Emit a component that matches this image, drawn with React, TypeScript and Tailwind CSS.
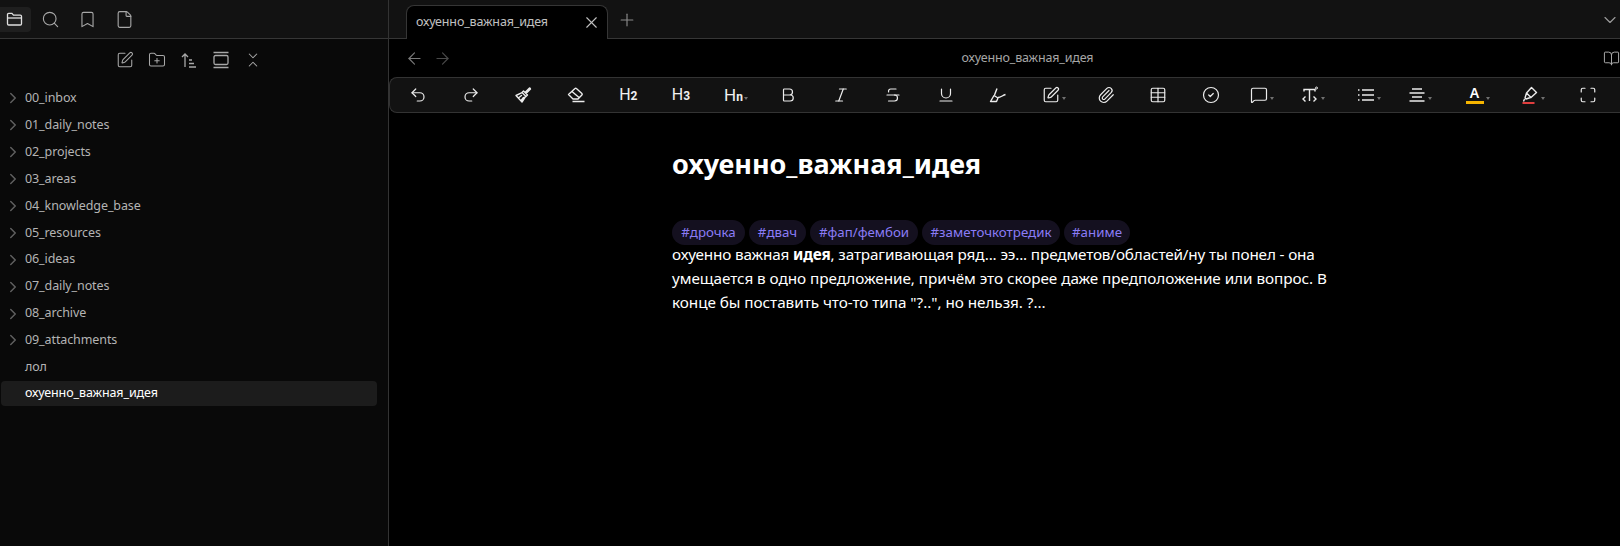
import type { ReactNode } from 'react'
import {
  Undo2, Redo2, Bold, Italic, Strikethrough, Underline, SquarePen, Paperclip, Table,
  CircleCheck, MessageSquare, Maximize, ChevronRight, ChevronDown, X, Plus,
  ArrowLeft, ArrowRight, BookOpen, Search, Bookmark, File, FolderPlus, ChevronsDownUp,
} from 'lucide-react'

const FOLDERS = [
  '00_inbox', '01_daily_notes', '02_projects', '03_areas', '04_knowledge_base',
  '05_resources', '06_ideas', '07_daily_notes', '08_archive', '09_attachments',
]

const TAGS = [
  { label: '#дрочка', width: 'w-[73px]' },
  { label: '#двач', width: 'w-[57px]' },
  { label: '#фап/фембои', width: 'w-[108px]' },
  { label: '#заметочкотредик', width: 'w-[138px]' },
  { label: '#аниме', width: 'w-[66px]' },
]

function Tool({ children, caret, width = 'w-[18px]' }: { children: ReactNode; caret?: boolean; width?: string }) {
  return (
    <div className={`relative h-[18px] flex items-center text-[#ececec] ${width}`}>
      <div className="w-[18px] h-[18px] flex items-center justify-center shrink-0">{children}</div>
      {caret && (
        <span className="absolute left-[20px] bottom-[4px] w-0 h-0 border-x-[2.5px] border-t-[3px] border-x-transparent border-t-[#707070]" />
      )}
    </div>
  )
}

function Heading({ n, big }: { n: string; big?: boolean }) {
  return (
    <span className={`font-['Roboto',sans-serif] leading-none text-[#f0f0f0] whitespace-nowrap ${big ? 'text-[17px]' : 'text-[16px]'}`}>
      H<span className="text-[12px] font-bold">{n}</span>
    </span>
  )
}

const ic = { size: 20, strokeWidth: 1.6 }

export default function App() {
  return (
    <div className="w-[1620px] h-[546px] flex bg-black overflow-hidden font-['Noto_Sans',sans-serif]">
      {/* Sidebar */}
      <aside className="w-[389px] shrink-0 flex flex-col bg-[#090909] border-r border-[#333]">
        <div className="h-[39px] shrink-0 flex items-center gap-[5px] bg-[#121212] border-b border-[#363636]">
          <div className="w-[31px] h-[25px] pr-[2px] rounded-r-[4px] bg-[#1f1f1f] flex items-center justify-center text-[#e0e0e0]">
            <svg width="17" height="17" viewBox="0 0 17 17" fill="none" stroke="currentColor" strokeWidth="1.3">
              <path d="M1.5 5.5V3.5a1.2 1.2 0 0 1 1.2-1.2h3.2l1.6 1.8h6.8a1.2 1.2 0 0 1 1.2 1.2v7.5a1.2 1.2 0 0 1-1.2 1.2H2.7a1.2 1.2 0 0 1-1.2-1.2z" />
              <path d="M1.5 7h14" />
            </svg>
          </div>
          <div className="w-[32px] flex justify-center text-[#a8a8a8] -ml-[2px]"><Search size={19} strokeWidth={1.4} /></div>
          <div className="w-[32px] flex justify-center text-[#a8a8a8]"><Bookmark size={19} strokeWidth={1.4} /></div>
          <div className="w-[32px] flex justify-center text-[#a8a8a8]"><File size={19} strokeWidth={1.4} /></div>
        </div>

        <div className="h-[42px] shrink-0 flex items-center justify-center gap-[14px] text-[#a8a8a8] pr-[10px]">
          <SquarePen size={18} strokeWidth={1.4} />
          <FolderPlus size={18} strokeWidth={1.4} />
          <svg width="18" height="18" viewBox="0 0 18 18" fill="none" stroke="currentColor" strokeWidth="1.3">
            <path d="M5 16V3M2 6l3-3 3 3M9 9h3M9 12.5h5M9 16h7" />
          </svg>
          <svg width="18" height="18" viewBox="0 0 18 18" fill="none" stroke="currentColor" strokeWidth="1.3">
            <path d="M1.5 1.5h15M1.5 16.5h15" />
            <rect x="2" y="4.5" width="14" height="9" rx="1.5" />
          </svg>
          <ChevronsDownUp size={18} strokeWidth={1.4} />
        </div>

        <nav className="flex flex-col pt-[4px] pr-[11px] pl-px text-[12.5px] tracking-[-0.1px] text-[#b4b4b4]">
          {FOLDERS.map(f => (
            <div key={f} className="h-[26.9px] flex items-center">
              <ChevronRight size={18} strokeWidth={2} className="ml-[3px] mr-[3px] text-[#5f5f5f]" />
              <span>{f}</span>
            </div>
          ))}
          <div className="h-[27px] flex items-center pl-[24px]">лол</div>
          <div className="h-[25px] flex items-center pl-[24px] rounded-[4px] bg-[#1c1c1c] text-white">охуенно_важная_идея</div>
        </nav>
      </aside>

      {/* Main */}
      <main className="flex-1 min-w-0 flex flex-col">
        <div className="h-[39px] shrink-0 flex items-end bg-[#121212] border-b border-[#363636] relative">
          <div className="ml-[17px] w-[202px] h-[34px] -mb-px flex items-center justify-between pl-[9px] pr-[6px] bg-black border border-b-0 border-[#363636] rounded-t-[8px]">
            <span className="text-[12.5px] tracking-[-0.15px] text-[#c0c0c0]">охуенно_важная_идея</span>
            <X size={19} strokeWidth={1.4} className="text-[#c0c0c0]" />
          </div>
          <Plus size={20} strokeWidth={1.4} className="ml-[9px] mb-[8px] text-[#8a8a8a]" />
          <ChevronDown size={20} strokeWidth={1.4} className="absolute right-0 top-[10px] text-[#9a9a9a]" />
        </div>

        <div className="h-[38px] shrink-0 flex items-center relative">
          <ArrowLeft size={19} strokeWidth={1.4} className="ml-[16px] text-[#7a7a7a]" />
          <ArrowRight size={19} strokeWidth={1.4} className="ml-[9px] text-[#4a4a4a]" />
          <span className="absolute left-0 right-0 text-center text-[12.5px] tracking-[-0.15px] text-[#a6a6a6] pl-[46px]">охуенно_важная_идея</span>
          <BookOpen size={17} strokeWidth={1.4} className="absolute right-0 text-[#a8a8a8]" />
        </div>

        <div className="h-[36px] shrink-0 flex items-center justify-between pl-[19px] pr-[23px] bg-[#121212] border border-r-0 border-[#333] rounded-l-[8px]">
          <Tool><Undo2 {...ic} /></Tool>
          <Tool><Redo2 {...ic} /></Tool>
          <Tool>
            <svg width="18" height="18" viewBox="0 0 18 18" fill="none" stroke="currentColor" strokeWidth="1.4" strokeLinejoin="round" strokeLinecap="round">
              <path d="M11 6.5l4.5-4.5a1.2 1.2 0 0 1 1 1L12 7.5zM9.5 5l4 4-1.5 1.5-4-4zM7.5 6.8L2 9.5l6 6.5 3.5-5.5M5 11.5l2.5-2M7.5 14l2-2.5" />
            </svg>
          </Tool>
          <Tool>
            <svg width="18" height="18" viewBox="0 0 18 18" fill="none" stroke="currentColor" strokeWidth="1.4" strokeLinejoin="round">
              <path d="M1.5 8.5L8 2.5a1 1 0 0 1 1.4 0l5.5 5a1 1 0 0 1 0 1.4L11 13H6zM5 5.5l7 6M5.5 15.5h12" />
            </svg>
          </Tool>
          <Tool><Heading n="2" /></Tool>
          <Tool><Heading n="3" /></Tool>
          <Tool caret width="w-[20px]"><Heading n="n" big /></Tool>
          <Tool><Bold {...ic} /></Tool>
          <Tool><Italic {...ic} /></Tool>
          <Tool><Strikethrough {...ic} /></Tool>
          <Tool><Underline {...ic} /></Tool>
          <Tool>
            <svg width="18" height="18" viewBox="0 0 18 18" fill="none" stroke="currentColor" strokeWidth="1.4" strokeLinejoin="round">
              <path d="M1.5 15.5h6l1.5-3.5-4-2.5zM5.5 9l2.5-6.5M9 11.5c2.5 0 4.5-2 7.5-3" />
            </svg>
          </Tool>
          <Tool caret width="w-[20px]"><SquarePen {...ic} /></Tool>
          <Tool><Paperclip {...ic} /></Tool>
          <Tool><Table {...ic} /></Tool>
          <Tool width="w-[14px]"><CircleCheck {...ic} /></Tool>
          <Tool caret width="w-[16px]"><MessageSquare {...ic} /></Tool>
          <Tool caret width="w-[22px]">
            <svg width="18" height="18" viewBox="0 0 18 18" fill="none" stroke="currentColor" strokeWidth="1.4">
              <path d="M3 5.5V3.5h11v2M8.5 3.5V15M4.5 10.5l-2.5 2.5 2.5 2.5M12.5 10.5l2.5 2.5-2.5 2.5" />
              <circle cx="15.5" cy="2" r="1" strokeWidth="1" />
            </svg>
          </Tool>
          <Tool caret width="w-[16px]">
            <svg width="18" height="18" viewBox="0 0 18 18" fill="none" stroke="currentColor" strokeWidth="1.6">
              <path d="M5 4h12M5 9h12M5 14h12M1 4h1.5M1 9h1.5M1 14h1.5" />
            </svg>
          </Tool>
          <Tool caret width="w-[23px]">
            <svg width="18" height="18" viewBox="0 0 18 18" fill="none" stroke="currentColor" strokeWidth="1.5">
              <path d="M4 3h10M1.5 7h15M4 11h10M1.5 15h15" />
            </svg>
          </Tool>
          <Tool caret width="w-[21px]">
            <div className="flex flex-col items-center">
              <span className="text-[14px] leading-[14px] font-semibold text-white">A</span>
              <span className="w-[18px] h-[3px] bg-[#f5b400] mt-px" />
            </div>
          </Tool>
          <Tool caret width="w-[23px]">
            <svg width="18" height="18" viewBox="0 0 18 18" fill="none">
              <path d="M10.5 1.5l5 5-5.5 5-4.5-4.5zM5.5 7l-1.5 5 1 1 4.5-1.5M3.5 13l-1 2.5" stroke="currentColor" strokeWidth="1.4" strokeLinejoin="round" />
              <path d="M1.5 17h12" stroke="#e03e3e" strokeWidth="2" />
            </svg>
          </Tool>
          <Tool><Maximize {...ic} /></Tool>
        </div>

        {/* Note */}
        <article className="pl-[283px] pt-[33px] text-white">
          <h1 className="text-[27px] leading-[36px] font-bold">охуенно_важная_идея</h1>
          <div className="flex gap-1 mt-[38px]">
            {TAGS.map(t => (
              <span key={t.label} className={`h-[25px] flex items-center justify-center rounded-full bg-[#14101f] text-[13.3px] text-[#8b7cf6] ${t.width}`}>{t.label}</span>
            ))}
          </div>
          <p className="text-[15.3px] tracking-[-0.05px] leading-[24px] -mt-[3px] w-[700px]">
            <span className="tracking-[-0.15px]">охуенно важная <b>идея</b>, затрагивающая ряд... ээ... предметов/областей/ну ты понел - она</span><br />
            умещается в одно предложение, причём это скорее даже предположение или вопрос. В<br />
            конце бы поставить что-то типа "?..", но нельзя. ?...
          </p>
        </article>
      </main>
    </div>
  )
}
